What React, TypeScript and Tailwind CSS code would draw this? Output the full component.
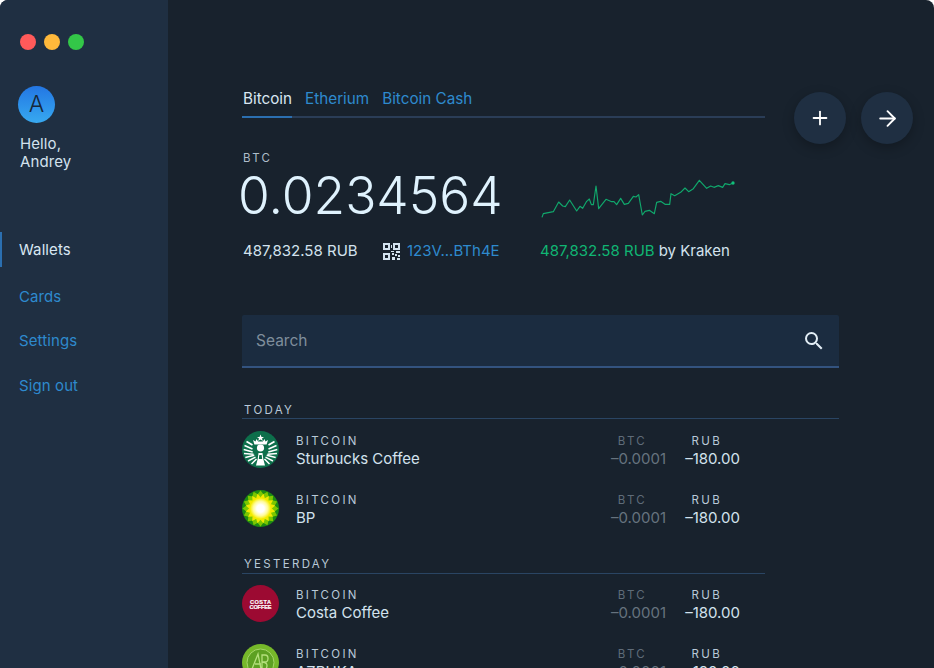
import React from 'react';
import { Plus, ArrowRight } from 'lucide-react';
import { MdSearch } from 'react-icons/md';

const sparkline =
  '36,410 40,399 55,396 70,393 86,364 98,376 106,378 119,358 140,391 150,377 158,383 170,362 178,355 184,372 190,372 198,316 206,384 228,356 245,363 252,363 260,372 272,353 283,371 295,368 310,347 318,349 326,342 337,403 345,392 358,389 373,399 380,365 392,362 405,371 419,371 423,339 434,345 452,335 465,322 476,333 490,324 508,299 530,323 542,316 552,320 565,315 578,320 585,309 598,312 609,307';

const StarbucksLogo = () => (
  <svg viewBox="0 0 37 37" className="w-[37px] h-[37px] shrink-0">
    <circle cx="18.5" cy="18.5" r="18.5" fill="#0d6f4b" />
    {/* star and crown */}
    <path d="M18.5 3.5l1 2.4 2.5.1-2 1.5.8 2.4-2.3-1.4-2.3 1.4.8-2.4-2-1.5 2.5-.1z" fill="#ffffff" />
    <path d="M11 9l2.6 1.6L14.4 8l1.8 2.6h4.6L22.6 8l.8 2.6L26 9l-1.4 4.4H12.4z" fill="#ffffff" />
    {/* face and body */}
    <ellipse cx="18.5" cy="17" rx="3.6" ry="3.4" fill="#ffffff" />
    <path d="M16.5 22h4l.8 6 1.7 6.5H14l1.7-6.5z" fill="#ffffff" />
    <path d="M17.3 24h2.4l.5 4h-3.4z" fill="#0d6f4b" />
    {/* tails */}
    <path d="M2.5 14.5l8 3.5M1.7 18.5l9 2.5M2 22.5l9.5 .8M3.3 26.5l9-2.2M6 30l7.5-3.8M9.5 33l5-5" stroke="#ffffff" strokeWidth="1.5" />
    <path d="M34.5 14.5l-8 3.5M35.3 18.5l-9 2.5M35 22.5l-9.5 .8M33.7 26.5l-9-2.2M31 30l-7.5-3.8M27.5 33l-5-5" stroke="#ffffff" strokeWidth="1.5" />
    <path d="M4.5 10.5l6 3.5M32.5 10.5l-6 3.5" stroke="#ffffff" strokeWidth="1.8" />
  </svg>
);

const petals = Array.from({ length: 16 }, (_, i) => i * 22.5);

const BpLogo = () => (
  <svg viewBox="0 0 37 37" className="w-[37px] h-[37px] shrink-0">
    <defs>
      <radialGradient id="bp-center">
        <stop offset="0.35" stopColor="#ffffff" />
        <stop offset="0.7" stopColor="#fffb9a" />
        <stop offset="1" stopColor="#f5ee00" />
      </radialGradient>
    </defs>
    <circle cx="18.5" cy="18.5" r="18.5" fill="#1c8a12" />
    {petals.map((a) => (
      <path key={a} d="M18.5 18.5L15 5 18.5 0.5 22 5z" fill="#7cc700" transform={`rotate(${a} 18.5 18.5)`} />
    ))}
    {petals.map((a) => (
      <path key={a} d="M18.5 18.5L16 8 18.5 3.5 21 8z" fill="#f2e900" transform={`rotate(${a + 11.25} 18.5 18.5)`} />
    ))}
    <circle cx="18.5" cy="18.5" r="10.5" fill="url(#bp-center)" />
  </svg>
);

const CostaLogo = () => (
  <svg viewBox="0 0 37 37" className="w-[37px] h-[37px] shrink-0">
    <circle cx="18.5" cy="18.5" r="18.5" fill="#9c0a32" />
    <text x="8" y="18.8" textLength="21" lengthAdjust="spacing" fill="#ffffff" stroke="#ffffff" strokeWidth="0.2" fontSize="5.6" fontWeight="700" fontFamily="'Liberation Sans', sans-serif">COSTA</text>
    <text x="7.5" y="24.4" textLength="22" lengthAdjust="spacing" fill="#ffffff" stroke="#ffffff" strokeWidth="0.2" fontSize="5.6" fontWeight="700" fontFamily="'Liberation Sans', sans-serif">COFFEE</text>
  </svg>
);

const AzbukaLogo = () => (
  <svg viewBox="0 0 37 37" className="w-[37px] h-[37px] shrink-0">
    <circle cx="18.5" cy="18.5" r="18.5" fill="#76b82a" />
    <circle cx="18.5" cy="18.5" r="13.5" fill="#5da022" stroke="#a5d76a" strokeWidth="1" />
    <path d="M10 25l6-15 3 15M13 20h6M20 25V11h3c4 0 4 7 0 7h-3M20 18c5 0 6 3 4 7" fill="none" stroke="#b4e07c" strokeWidth="1.3" />
  </svg>
);

const transactions = {
  today: [
    { name: 'Sturbucks Coffee', logo: <StarbucksLogo /> },
    { name: 'BP', logo: <BpLogo /> },
  ],
  yesterday: [
    { name: 'Costa Coffee', logo: <CostaLogo /> },
    { name: 'AZBUKA', logo: <AzbukaLogo /> },
  ],
};

const Row = ({ name, logo }: { name: string; logo: React.ReactNode }) => (
  <div className="flex items-start h-[37px] w-[498px] shrink-0">
    {logo}
    <div className="ml-[17px] flex-1 pt-[3px]">
      <div className="text-[11.5px] leading-[14px] tracking-[0.2em] text-[#b9c9d8]">BITCOIN</div>
      <div className="text-[15px] leading-[22px] text-[#d3e2ee] whitespace-nowrap">{name}</div>
    </div>
    <div className="w-[58px] text-right pt-[3px]">
      <div className="text-[11.5px] leading-[14px] tracking-[0.2em] text-[#5f6c79] pr-[19px]">BTC</div>
      <div className="text-[15px] leading-[22px] text-[#66737f]">–0.0001</div>
    </div>
    <div className="w-[74px] text-right pt-[3px]">
      <div className="text-[11.5px] leading-[14px] tracking-[0.2em] text-[#b9c9d8] pr-[18px]">RUB</div>
      <div className="text-[15px] leading-[22px] text-[#d3e2ee]">–180.00</div>
    </div>
  </div>
);

const RoundButton = ({ children }: { children: React.ReactNode }) => (
  <button className="w-[52px] h-[52px] rounded-full bg-[#1f2f42] shadow-[0_4px_12px_rgba(0,0,0,0.25)] flex items-center justify-center text-white">
    {children}
  </button>
);

export default function App() {
  return (
    <div className="w-[934px] h-[668px] bg-white overflow-hidden">
      <div
        className="flex w-full h-full rounded-t-[8px] overflow-hidden bg-[#18222d]"
        style={{ fontFamily: "Inter, 'Liberation Sans', sans-serif" }}
      >
        <aside className="w-[168px] shrink-0 h-full bg-[#1f2f42]">
          <div className="flex gap-2 pl-5 pt-[34px]">
            <span className="w-4 h-4 rounded-full bg-[#ff5a5a]" />
            <span className="w-4 h-4 rounded-full bg-[#ffb93b]" />
            <span className="w-4 h-4 rounded-full bg-[#33c748]" />
          </div>
          <div className="ml-[18px] mt-[36px] w-[37px] h-[37px] rounded-full bg-gradient-to-b from-[#2476e3] to-[#38a9f0] flex items-center justify-center text-[23px] font-light text-[#17273a]">
            A
          </div>
          <div className="ml-5 mt-[12px] text-[15px] tracking-[0.1px] leading-[18px] text-[#d3e2ee]">
            Hello,
            <br />
            Andrey
          </div>
          <nav className="mt-[61px] text-[15px] tracking-[0.1px] text-[#2e8ace]">
            <div className="h-[35px] flex items-center pl-[19px] pt-[1px] relative text-[#d9e7f2]">
              <span className="absolute left-0 top-0 w-[2px] h-full bg-[#2b6fb0]" />
              Wallets
            </div>
            <div className="mt-[21px] pl-[19px] leading-[18px]">Cards</div>
            <div className="mt-[26px] pl-[19px] leading-[18px]">Settings</div>
            <div className="mt-[27px] pl-[19px] leading-[18px]">Sign out</div>
          </nav>
        </aside>

        <main className="flex-1 pl-[74px] pt-[87px] text-[#d3e2ee]">
          <div className="flex items-start">
            <div className="w-[523px] h-[31px] flex gap-[13px] border-b-2 border-[#2a3d57] text-[15.25px] leading-[24px] text-[#2e8ace]">
              <div className="h-[31px] pl-[1px] border-b-2 border-[#2b6fb0] text-[#d9e7f2]">Bitcoin</div>
              <div>Etherium</div>
              <div>Bitcoin Cash</div>
            </div>
            <div className="flex gap-[15px] ml-[29px] mt-[5px]">
              <RoundButton>
                <Plus size={22} strokeWidth={2} />
              </RoundButton>
              <RoundButton>
                <ArrowRight size={25} strokeWidth={1.8} />
              </RoundButton>
            </div>
          </div>

          <div className="mt-[7px] pl-[1px] text-[11.5px] leading-[14px] tracking-[0.2em] text-[#aebdca]">BTC</div>

          <div className="flex items-start h-[44px] mt-[8px]">
            <div className="text-[51.5px] leading-[44px] font-light text-[#dff2fd] -ml-[4px] whitespace-nowrap">0.0234564</div>
            <svg viewBox="30 295 585 117" className="w-[195px] h-[39px] ml-[37px] mt-[6px]">
              <polyline points={sparkline} fill="none" stroke="#10a86c" strokeWidth="3.5" strokeLinejoin="round" />
              <circle cx="609" cy="307" r="5" fill="#10c07a" />
            </svg>
          </div>

          <div className="flex items-center mt-[22px] pl-[1px] text-[15px] leading-[24px] whitespace-nowrap">
            <span className="w-[140px]">487,832.58 RUB</span>
            <svg viewBox="0 0 17 17" className="w-[17px] h-[17px] text-[#d3e2ee]" fill="currentColor">
              <path fillRule="evenodd" d="M0 0h7v7H0zM2 2v3h3V2zM10 0h7v7h-7zM12 2v3h3V2zM0 10h7v7H0zM2 12v3h3v-3z" />
              <path d="M8 2h1v3H8zM8 8h3v1H8zM13 8h4v2h-4zM9 10h2v2H9zM12 11h2v2h-2zM15 12h2v2h-2zM9 14h3v3H9zM14 15h3v2h-3z" />
            </svg>
            <span className="ml-[7px] w-[133px] text-[#2e8ace]">123V...BTh4E</span>
            <span className="text-[#10b573]">487,832.58 RUB</span>
            <span className="ml-[4px]">by Kraken</span>
          </div>

          <div className="mt-[52px] w-[597px] h-[53px] bg-[#1b2c40] rounded-t-[2px] border-b-2 border-[#33537f] flex items-center justify-between pl-[14px] pr-[13px]">
            <span className="text-[15.5px] text-[#7f8e9c]">Search</span>
            <MdSearch size={24} className="text-[#e3eef6]" />
          </div>

          <div className="mt-[35px] w-[597px] h-[16px] border-b border-[#2a4563] pl-[2px] text-[11.5px] leading-[14px] tracking-[0.2em] text-[#b9c9d8]">
            TODAY
          </div>
          <div className="mt-[12px] flex flex-col gap-[22px]">
            {transactions.today.map((t) => (
              <Row key={t.name} {...t} />
            ))}
          </div>

          <div className="mt-[30px] w-[523px] h-[17px] border-b border-[#2a4563] pl-[2px] text-[11.5px] leading-[14px] tracking-[0.2em] text-[#b9c9d8]">
            YESTERDAY
          </div>
          <div className="mt-[11px] flex flex-col gap-[22px]">
            {transactions.yesterday.map((t) => (
              <Row key={t.name} {...t} />
            ))}
          </div>
        </main>
      </div>
    </div>
  );
}
